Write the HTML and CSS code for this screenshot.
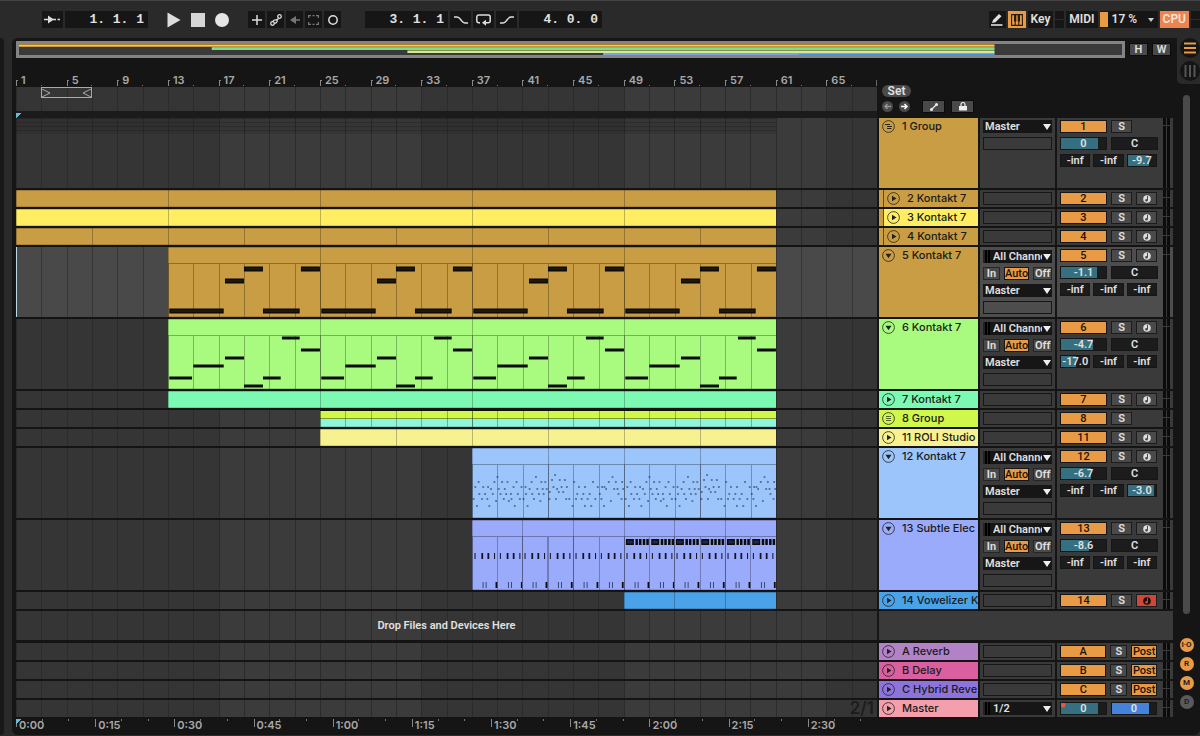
FILE: index.html
```html
<!DOCTYPE html>
<html lang="en">
<head>
    <meta charset="UTF-8">
    <meta name="viewport" content="width=device-width, initial-scale=1.0">
    <title>Arrangement</title>
    <link rel="stylesheet" href="styles.css">
</head>
<body>
    <header class="topbar">
        <div class="tools">
            <button class="cell wide" aria-label="Follow">
                <svg width="17" height="9" viewBox="0 0 17 9"><path d="M0 4.500h5" stroke="#ddd" stroke-width="1.500"/><path d="M4 0.500l6 4-6 4z" fill="#ddd"/><path d="M9 4.500h3M13.500 4.500h2.500" stroke="#ddd" stroke-width="1.500"/></svg>
            </button>
            <input class="position" type="text" aria-label="Song position" value="1. 1. 1">
        </div>
        <div class="tools transport">
            <button class="bare" aria-label="Play"><svg width="14" height="16" viewBox="0 0 14 16"><path d="M0.500 0.500v15L13.500 8z" fill="#ddd"/></svg></button>
            <button class="bare" aria-label="Stop"><svg width="14" height="14" viewBox="0 0 14 14"><path d="M0 0h14v14H0z" fill="#d6d6d6"/></svg></button>
            <button class="bare" aria-label="Record"><svg width="14" height="14" viewBox="0 0 14 14"><circle cx="7" cy="7" r="7" fill="#e6e6e6"/></svg></button>
        </div>
        <div class="tools">
            <button class="cell" aria-label="Overdub"><svg width="10" height="10" viewBox="0 0 10 10"><path d="M5 0v10M0 5h10" stroke="#ddd" stroke-width="1.500"/></svg></button>
            <button class="cell" aria-label="Automation arm"><svg width="12" height="12" viewBox="0 0 12 12" fill="none" stroke="#ddd" stroke-width="1.300"><circle cx="2.500" cy="9.500" r="1.800"/><circle cx="9.500" cy="2.500" r="1.800"/><path d="M3 7.800c0-2 1.500-2 3-2s2.300-.4 2.500-1.700M4.200 9.300c1.500 0 3-.5 3-3"/></svg></button>
            <button class="cell" aria-label="Re-enable automation"><svg width="10" height="8" viewBox="0 0 10 8"><path d="M0 4l6-4v8z" fill="#777"/><path d="M5 4h5" stroke="#777" stroke-width="1.500"/></svg></button>
            <button class="cell" aria-label="Capture"><svg width="11" height="10" viewBox="0 0 11 10"><path d="M0.600 3V0.600H3M8 0.600h2.400V3M10.400 7v2.400H8M3 9.400H0.600V7M4.500 0.600h2M4.500 9.400h2" fill="none" stroke="#777" stroke-width="1.200"/></svg></button>
            <button class="cell" aria-label="Session record"><svg width="10" height="10" viewBox="0 0 10 10"><circle cx="5" cy="5" r="4.200" fill="none" stroke="#ddd" stroke-width="1.500"/></svg></button>
        </div>
        <div class="tools loop">
            <input class="position" type="text" aria-label="Loop start" value="3. 1. 1">
            <button class="cell wide" aria-label="Punch in"><svg width="14" height="8" viewBox="0 0 14 8"><path d="M0 1h3c2 0 2.500 1 4 3s2 3 4 3h3" fill="none" stroke="#ddd" stroke-width="1.500"/></svg></button>
            <button class="cell wide" aria-label="Loop"><svg width="15" height="12" viewBox="0 0 15 12"><path d="M4 8.700H2.800a2 2 0 0 1-2-2V3a2 2 0 0 1 2-2h9.400a2 2 0 0 1 2 2v3.700a2 2 0 0 1-2 2H9" fill="none" stroke="#ddd" stroke-width="1.500"/><path d="M6 8.700L10 5.700v6z" fill="#ddd"/></svg></button>
            <button class="cell wide" aria-label="Punch out"><svg width="14" height="8" viewBox="0 0 14 8"><path d="M0 7h3c2 0 2.500-1 4-3s2-3 4-3h3" fill="none" stroke="#ddd" stroke-width="1.500"/></svg></button>
            <input class="position" type="text" aria-label="Loop length" value="4. 0. 0">
        </div>
        <div class="tools status">
            <button class="cell" aria-label="Draw mode"><svg width="12" height="12" viewBox="0 0 12 12"><path d="M1 9l1-3L8 0l2.500 2.300-6 6z" fill="#e0e0e0"/><path d="M0 11h11.500" stroke="#e0e0e0" stroke-width="1.600"/></svg></button>
            <button class="cell on" aria-label="Computer MIDI keyboard"><svg width="12" height="12" viewBox="0 0 12 12"><path d="M0.600 0.600h10.800v10.800H0.600zM4.200 6v5.500M7.800 6v5.500" fill="none" stroke="#2a1c0c" stroke-width="1.100"/><path d="M3 0.500h2.300v7H3zM6.700 0.500H9v7H6.700z" fill="#2a1c0c"/></svg></button>
            <button class="cell text">Key</button>
            <span class="leds"></span>
            <button class="cell text">MIDI</button>
            <span class="load">
                <span class="load-bar"></span>
                <span class="load-value">17 %</span>
                <svg width="6" height="4" viewBox="0 0 6 4"><path d="M0 0h6L3 4z" fill="#ccc"/></svg>
            </span>
            <button class="cell text cpu">CPU</button>
            <span class="leds"></span>
        </div>
    </header>

    <main class="workspace">
        <div class="browser-edge"></div>
        <div class="panel">
            <div class="arrangement">
                <div class="overview-row">
                    <div class="overview">
                        <svg viewBox="0 0 68 11" preserveAspectRatio="none">
                            <path d="M0 0h60v1H0z" fill="#ab7d2c"/>
                            <path d="M0 1h60v1H0z" fill="#f0cf55"/>
                            <path d="M0 2h60v1H0z" fill="#c8973a"/>
                            <path d="M12 3h48v1H12z" fill="#c99d43"/>
                            <path d="M12 4h48v2H12z" fill="#77e08a"/>
                            <path d="M24 6h36v1H24z" fill="#8b8f45"/>
                            <path d="M24 7h36v2H24z" fill="#cfe9a0"/>
                            <path d="M36 9h24v2H36z" fill="#7d9fe4"/>
                            <path d="M48 10h12v1H48z" fill="#4a8fe0"/>
                        </svg>
                    </div>
                    <button class="gray">H</button>
                    <button class="gray">W</button>
                </div>
                <div class="ruler-row">
                    <div class="ruler">
                        <div class="bars" id="bars"></div>
                        <div class="loop-lane grid-lines"><span class="loop-brace"><svg width="9" height="8" viewBox="0 0 9 8"><path d="M0 0l8 4-8 4" fill="none" stroke="#aaa"/></svg><svg width="9" height="8" viewBox="0 0 9 8"><path d="M9 0L1 4l8 4" fill="none" stroke="#aaa"/></svg></span></div>
                        <div class="scrub"><i class="marker"></i></div>
                    </div>
                    <div class="locators">
                        <button class="set">Set</button>
                        <div class="locator-buttons">
                            <button class="round" aria-label="Previous locator"><svg width="7" height="7" viewBox="0 0 7 7"><path d="M7 3.500H1M3.500 1L1 3.500 3.500 6" fill="none" stroke="#999" stroke-width="1.300"/></svg></button>
                            <button class="round" aria-label="Next locator"><svg width="7" height="7" viewBox="0 0 7 7"><path d="M0 3.500h6M3.500 1L6 3.500 3.500 6" fill="none" stroke="#fff" stroke-width="1.500"/></svg></button>
                            <button class="gray tool" aria-label="Automation mode"><svg width="8" height="8" viewBox="0 0 8 8"><path d="M1.500 6.500l5-5" stroke="#eee" stroke-width="1.200"/><circle cx="1.500" cy="6.500" r="1.500" fill="#eee"/><circle cx="6.500" cy="1.500" r="1.500" fill="#eee"/></svg></button>
                            <button class="gray tool" aria-label="Lock envelopes"><svg width="8" height="9" viewBox="0 0 8 9"><path d="M0 4h8v4.500H0z" fill="#eee"/><path d="M2 4V2.500a2 2 0 0 1 4 0V4" fill="none" stroke="#eee" stroke-width="1.200"/></svg></button>
                        </div>
                    </div>
                </div>
                <div id="tracks"></div>
                <div class="time-row">
                    <div class="times" id="times"><i class="marker"></i></div>
                </div>
            </div>
            <aside class="rail">
                <div class="views">
                    <button aria-label="Arrangement view"><svg width="20" height="20" viewBox="0 0 20 20"><circle cx="10" cy="10" r="10" fill="#151515"/><path d="M4 5.500h12M4 10h12M4 14.500h12" stroke="#e89b44" stroke-width="2"/></svg></button>
                    <button aria-label="Session view"><svg width="20" height="20" viewBox="0 0 20 20"><circle cx="10" cy="10" r="10" fill="#151515"/><path d="M5.500 4v12M10 4v12M14.500 4v12" stroke="#555" stroke-width="2"/></svg></button>
                </div>
                <div class="scrollbar"></div>
                <div class="sections">
                    <button class="on" aria-label="Input output section">I·O</button>
                    <button class="on" aria-label="Returns section">R</button>
                    <button class="on" aria-label="Mixer section">M</button>
                    <button aria-label="Track delay section">D</button>
                </div>
            </aside>
        </div>
    </main>
    <script src="script.js"></script>
</body>
</html>
```

FILE: styles.css
```css
* {
    box-sizing: border-box;
}
body {
    margin: 0;
    min-height: 100vh;
    background-color: #2a2a2a;
    border-top: 1px solid #444;
    color: #e0e0e0;
    font-family: Roboto, "Liberation Sans", sans-serif;
    font-size: 11px;
    font-weight: 600;
    line-height: 13px;
    overflow-x: hidden;
}
button, input, select {
    font: inherit;
    color: inherit;
    margin: 0;
    padding: 0;
    border: none;
    border-radius: 0;
    background: none;
}
button {
    display: flex;
    align-items: center;
    justify-content: center;
    cursor: pointer;
}
svg {
    display: block;
}

/* Top bar */
.topbar {
    display: flex;
    align-items: center;
    height: 37px;
    padding-left: 42px;
}
.tools {
    display: flex;
    align-items: center;
    gap: 2px;
}
.cell, .position {
    width: 17px;
    height: 17px;
    background-color: #161616;
}
.cell.wide {
    width: 21px;
}
.cell.on {
    background-color: #e89b44;
    width: 18px;
}
.cell.text {
    width: auto;
    padding: 0 3px;
    font-size: 12px;
}
.position {
    width: 83px;
    padding-right: 4px;
    text-align: right;
    font-family: "Liberation Mono", monospace;
    font-size: 13px;
    font-weight: bold;
}
.transport {
    gap: 10px;
    margin: 0 19px;
}
.loop {
    margin-left: 24px;
}
.status {
    margin-left: auto;
}
.leds {
    width: 9px;
    height: 17px;
    background: linear-gradient(#161616 8px, #2a2a2a 8px 9px, #161616 9px);
}
.load {
    display: flex;
    align-items: center;
    width: 58px;
    height: 17px;
    padding-right: 4px;
    background-color: #161616;
    font-size: 12px;
}
.load-bar {
    width: 8px;
    height: 15px;
    background-color: #e89b44;
}
.load-value {
    flex: 1;
    padding-left: 4px;
}
.cell.cpu {
    background-color: #ef8350;
    color: #f3e6d8;
}

/* Workspace */
.workspace {
    display: flex;
    gap: 8px;
}
.browser-edge {
    width: 4px;
    background-color: #181818;
    border-radius: 0 5px 5px 0;
}
.panel {
    flex: 1;
    display: flex;
    min-width: 0;
    background-color: #151515;
    border-radius: 6px;
    padding-left: 4px;
}
.arrangement {
    flex: 1;
    min-width: 0;
    padding-top: 3px;
}
.overview-row {
    display: flex;
    align-items: center;
    gap: 4px;
    padding-right: 2px;
}
.overview {
    flex: 1;
    height: 17px;
    border: 3px solid #848484;
    background-color: #3a3a3a;
    overflow: hidden;
}
.overview svg {
    width: calc(100% + 6px);
    height: 11px;
    margin: 0 -3px;
}
.gray {
    width: 19px;
    height: 13px;
    background-color: #4a4a4a;
    border: 1px solid #0c0c0c;
}

/* Ruler */
.ruler-row {
    display: flex;
}
.ruler {
    flex: 1;
    padding-top: 16px;
}
.bars {
    display: grid;
    grid-template-columns: repeat(17, 1fr);
    background: linear-gradient(#666, #666) 100% 6px / 1px 6px no-repeat;
}
.bars, .times {
    color: #a8a8a8;
    font-family: Inter, "Liberation Sans", sans-serif;
}
.bars span {
    padding-left: 5px;
    background:
        linear-gradient(#888, #888) 0 6px / 1px 6px no-repeat,
        linear-gradient(#888, #888) 0 6px / 2px 1px no-repeat,
        linear-gradient(#777, #777) 50% 11px / 1px 1px no-repeat;
}
.grid-lines {
    background:
        repeating-linear-gradient(to right, #2b2b2b 0 1px, transparent 1px calc(100% / 34)),
        repeating-linear-gradient(to right, #353535 0 calc(100% / 4.25), #3b3b3b calc(100% / 4.25) calc(100% / 2.125));
}
.loop-lane {
    height: 24px;
}
.loop-brace {
    display: flex;
    justify-content: space-between;
    align-items: center;
    width: calc(100% / 17);
    height: 11px;
    margin-left: calc(100% / 34);
    border: 1px solid #aaa;
}
.scrub {
    display: flex;
    align-items: flex-end;
    height: 7px;
    background-color: #1b1b1b;
}
.marker {
    width: 5px;
    height: 5px;
    background: linear-gradient(135deg, #5bc0de 50%, transparent 50%);
}
.locators {
    width: 296px;
    padding: 27px 0 0 5px;
}
.set {
    width: 29px;
    height: 12px;
    border-radius: 6px;
    background-color: #4a4a4a;
    font-size: 12px;
}
.locator-buttons {
    display: flex;
    align-items: center;
    gap: 6px;
    padding-top: 3px;
}
.round {
    width: 11px;
    height: 11px;
    border-radius: 50%;
    background-color: #4a4a4a;
}
.gray.tool {
    width: 23px;
}
.round + .tool {
    margin-left: 6px;
}

/* Tracks */
.track {
    display: flex;
    gap: 2px;
    height: 19px;
    border-bottom: 2px solid #141414;
}
.track.tall {
    height: 72px;
}
.track.drop {
    height: 32px;
    border-bottom-width: 3px;
}
.lane {
    flex: 1;
    min-width: 0;
    display: grid;
    grid-template-columns: repeat(68, minmax(0, 1fr));
    grid-template-rows: 100%;
}
.lane-text {
    grid-column: 1 / -1;
    align-self: center;
    text-align: center;
}
.lane-grid {
    grid-column: 1 / -1;
    text-align: right;
    padding-right: 3px;
    color: #1c1c1c;
    font-family: Inter, "Liberation Sans", sans-serif;
    font-size: 17px;
    line-height: 17px;
}
.selected .lane {
    background:
        repeating-linear-gradient(to right, #363636 0 1px, transparent 1px calc(100% / 34)),
        #494949;
    box-shadow: inset 1px 0 #b8dce6;
}
.clip {
    display: flex;
    flex-direction: column;
    overflow: hidden;
    background-color: var(--color);
    box-shadow: inset 1px 0 rgba(0, 0, 0, 0.25), inset 0 1px rgba(0, 0, 0, 0.2), inset 0 -1px rgba(0, 0, 0, 0.15);
}
.clip-title {
    flex: none;
    height: 17px;
    border-bottom: 1px solid rgba(0, 0, 0, 0.3);
}
.clip-body {
    flex: 1;
    min-height: 0;
    width: 100%;
}
.clip-lines {
    background-image: repeating-linear-gradient(to right, rgba(0, 0, 0, 0.28) 0 1px, transparent 1px calc(100% / var(--cells)));
}
.clip-split {
    background: linear-gradient(#141414 1px, #cff84a 1px 8px, #7d9a25 8px 9px, #8ff5dc 9px);
}
.clip-stripes {
    height: 16px;
    background: repeating-linear-gradient(rgba(0, 0, 0, 0.25) 0 1px, rgba(0, 0, 0, 0.1) 1px 4px);
}
.track-head {
    display: flex;
    align-items: flex-start;
    gap: 7px;
    width: 99px;
    padding: 2px 3px;
    background-color: var(--color);
    color: #1a1a1a;
    font-family: Inter, "Liberation Sans", sans-serif;
    font-weight: 500;
    white-space: nowrap;
    overflow: hidden;
}
.nested .track-head {
    border-left: 4px solid #c99d43;
    box-shadow: inset 1px 0 #5c4a20;
    padding-left: 4px;
}
.fold {
    flex: none;
}
.io, .mixer, .drop-fill {
    background-color: #3a3a3a;
}
.selected .io, .selected .mixer {
    background-color: #4d4d4d;
}
.drop-fill {
    width: 294px;
}
.io {
    display: flex;
    flex-direction: column;
    gap: 4px;
    width: 75px;
    padding: 2px 3px;
}
.midi .io {
    padding-top: 3px;
}
.slot {
    height: 13px;
    border: 1px solid #161616;
}
.choice {
    position: relative;
    display: flex;
    height: 13px;
    background-color: #161616;
}
.choice select {
    appearance: none;
    width: 100%;
    height: 13px;
    padding: 0 9px 0 2px;
    text-overflow: clip;
}
.choice.metered select {
    padding-left: 10px;
}
.choice.metered {
    background: linear-gradient(to right, #222 2px, #000 2px 4px, #222 4px 5px, #000 5px 7px, #161616 7px);
}
.choice svg {
    position: absolute;
    right: 0;
    top: 0;
    background-color: #161616;
    pointer-events: none;
}
.monitor {
    display: flex;
    gap: 4px;
}
.monitor button {
    flex: 0 0 17px;
    height: 13px;
    background-color: #4a4a4a;
    border: 1px solid #262626;
}
.monitor .on {
    flex: 1;
}
.monitor button:last-child {
    flex-basis: 19px;
}
.monitor button.on, .post, .activator {
    background-color: #e89b44;
    color: #1c1208;
    font-weight: 500;
    border: 1px solid #161616;
}
.mixer {
    display: flex;
    justify-content: space-between;
    width: 116px;
    padding: 0 3px;
}
.strip {
    display: flex;
    flex-direction: column;
    gap: 4px;
    width: 97px;
    padding-top: 2px;
}
.strip-row {
    display: flex;
    gap: 4px;
}
.strip-row.sends {
    gap: 3px;
}
.activator {
    width: 47px;
    height: 13px;
}
.small {
    width: 21px;
    height: 13px;
    background-color: #4a4a4a;
    border: 1px solid #1c1c1c;
}
.return .small {
    width: 17px;
}
.small.armed {
    background-color: #cf463b;
}
.post {
    width: 26px;
    height: 13px;
}
.value {
    width: 47px;
    height: 13px;
    text-align: center;
    border: 1px solid #161616;
    background: linear-gradient(to right, #34707f var(--fill), #1c1c1c var(--fill));
}
.sends .value {
    width: 31px;
    min-width: 0;
}
.value.cue {
    width: 46px;
    background: linear-gradient(to right, #4583da var(--fill), #1c1c1c var(--fill));
}
.value.dotted {
    background:
        radial-gradient(circle at 2px 2px, #e05a48 2px, transparent 3px),
        linear-gradient(to right, #34707f var(--fill), #1c1c1c var(--fill));
}
.meter {
    width: 7px;
    background:
        linear-gradient(#3a3a3a, #3a3a3a) 0 7px / 7px 1px no-repeat,
        linear-gradient(to right, #0b0b0b 3px, #3a3a3a 3px 4px, #0b0b0b 4px);
}

/* Time ruler */
.time-row {
    padding-right: 296px;
}
.times {
    position: relative;
    display: flex;
    height: 16px;
    overflow: hidden;
}
.times .marker {
    position: absolute;
    left: 0;
    top: 0;
}
.times span {
    flex: none;
    width: calc(100% / 10.875);
    padding-left: 3px;
    background:
        linear-gradient(#888, #888) 0 0 / 1px 8px no-repeat,
        linear-gradient(#777, #777) 33% 0 / 1px 2px no-repeat,
        linear-gradient(#777, #777) 67% 0 / 1px 2px no-repeat;
}

/* Right rail */
.rail {
    display: flex;
    flex-direction: column;
    align-items: center;
    width: 27px;
    padding-bottom: 26px;
}
.views {
    align-self: flex-end;
    display: flex;
    flex-direction: column;
    align-items: flex-end;
    gap: 3px;
    width: 23px;
    height: 46px;
    background-color: #2a2a2a;
    border-bottom-left-radius: 5px;
}
.scrollbar {
    flex: 1;
    width: 7px;
    margin: 11px 0 24px;
    border-radius: 4px;
    background-color: #4a4a4a;
}
.sections {
    display: flex;
    flex-direction: column;
    gap: 5px;
}
.sections button {
    width: 14px;
    height: 14px;
    border-radius: 50%;
    background-color: #5a5a5a;
    color: #1a1a1a;
    font-size: 8px;
    line-height: 14px;
}
.sections .on {
    background-color: #e89b44;
}
```

FILE: script.js
```js
const ORANGE = '#c99d43';

// bar: length of one clip, in bars
const tracks = [
    { name: '1 Group', num: '1', color: ORANGE, type: 'group', tall: true, vol: '0', volFill: 83, sends: [['-inf', 0], ['-inf', 0], ['-9.7', 76]] },
    { name: '2 Kontakt 7', num: '2', color: ORANGE, nested: true, start: 1, bar: 12 },
    { name: '3 Kontakt 7', num: '3', color: '#ffee62', nested: true, start: 1, bar: 12 },
    { name: '4 Kontakt 7', num: '4', color: ORANGE, nested: true, start: 1, bar: 6 },
    { name: '5 Kontakt 7', num: '5', color: ORANGE, type: 'midi', tall: true, selected: true, start: 13, bar: 12, notes: 'bass', vol: '-1.1', volFill: 81, sends: [['-inf', 0], ['-inf', 0], ['-inf', 0]] },
    { name: '6 Kontakt 7', num: '6', color: '#a9fb80', type: 'midi', tall: true, start: 13, bar: 12, notes: 'melody', vol: '-4.7', volFill: 71, sends: [['-17.0', 55], ['-inf', 0], ['-inf', 0]] },
    { name: '7 Kontakt 7', num: '7', color: '#7cfab4', start: 13, bar: 12 },
    { name: '8 Group', num: '8', color: '#cff84a', type: 'group', start: 25, bar: 12 },
    { name: '11 ROLI Studio', num: '11', color: '#f7f18f', start: 25, bar: 6 },
    { name: '12 Kontakt 7', num: '12', color: '#9bc5fb', type: 'midi', tall: true, start: 37, bar: 6, notes: 'arp', vol: '-6.7', volFill: 67, sends: [['-inf', 0], ['-inf', 0], ['-3.0', 92]] },
    { name: '13 Subtle Elec', num: '13', color: '#9babfb', type: 'midi', tall: true, start: 37, bar: 4, notes: 'drums', vol: '-8.6', volFill: 63, sends: [['-inf', 0], ['-inf', 0], ['-inf', 0]] },
    { name: '14 Vowelizer K', num: '14', color: '#4aa3e8', start: 49, bar: 4, armed: true },
    { type: 'drop' },
    { name: 'A Reverb', num: 'A', color: '#b183c6', type: 'return' },
    { name: 'B Delay', num: 'B', color: '#d95fa0', type: 'return' },
    { name: 'C Hybrid Reve', num: 'C', color: '#8c74dc', type: 'return' },
    { name: 'Master', color: '#f49fab', type: 'master' }
];
const END = 61;

// [start, end, y], x in bars from the clip start
const bass = [[0.1, 4.4, 47], [4.5, 6, 17], [6, 7.5, 5], [7.5, 10.4, 47], [10.5, 12, 5]];
const melody = [[0.1, 1.9, 42], [2, 4.4, 30], [4.5, 6, 22], [6, 7.5, 50], [7.5, 8.9, 42], [9, 10.4, 2], [10.5, 12, 14]];

// arpeggio steps, one line for each pair of bars: tick (38 to the bar) and row
const arpRows = [10, 12, 15, 17, 22, 24, 27, 29, 34, 36, 41];
const arp = [
    '4:8 9:4 14:10 19:3 21:7 29:8 33:4 38:7 47:4 45:8 51:10 56:5 61:7 66:3 71:9',
    '75:1 79:5 84:7 89:3 97:5 94:8 101:7 105:3 109:9 115:7 117:8 123:4 127:10 132:3 136:7 142:8 147:4',
    '153:8 159:4 160:7 165:10 171:5 177:3 179:7 184:8 190:1 194:5 199:7 203:9 206:3 210:5 213:7 218:3 222:5',
    '230:8 231:6 238:2 242:4 247:0 249:8 253:5 258:6 261:2 266:4 271:6 276:2 280:8 282:4 289:8 299:10',
    '304:3 309:8 313:7 318:4 326:8 331:7 336:4 336:10 344:8 350:7 355:10 360:3 367:8 374:4',
    '380:7 385:8 387:4 393:10 394:4 399:5 407:3 413:9 418:1 423:5 428:3 433:5 436:7 447:3 445:8 450:5'
].join(' ').split(' ').map(s => s.split(':').map(Number));

function rect(x1, x2, y, h, fill) {
    return `<rect x="${x1.toFixed(2)}" y="${y - h / 2}" width="${(x2 - x1).toFixed(2)}" height="${h}" fill="${fill || '#0b0b0b'}"/>`;
}

function noteShapes(kind) {
    let out = '';
    if (kind === 'bass' || kind === 'melody') {
        for (let rep = 0; rep < 48; rep += 12) {
            (kind === 'bass' ? bass : melody).forEach(([a, b, y]) => {
                out += rect(rep + a, rep + b, y, kind === 'bass' ? 5 : 3);
                if (kind === 'bass') out += rect(rep + a + 0.1, rep + b - 0.1, y, 2, '#1f1808');
            });
        }
    }
    if (kind === 'arp') {
        for (let rep = 0; rep < 24; rep += 12) {
            arp.forEach(([t, row]) => {
                const x = rep + t / 37.75;
                out += rect(x - 0.05, x + 0.09, arpRows[row], 1, '#14243a');
            });
        }
    }
    if (kind === 'drums') {
        for (let cell = 0; cell < 24; cell += 2) {
            [0.2, 0.74, 1.22, 1.74].forEach((x, i) => out += rect(cell + x, cell + x + (i % 3 ? 0.14 : 0.08), 19, 6, '#10132a'));
            [0.84, 1.08].forEach(x => out += rect(cell + x, cell + x + 0.07, 48, 6, '#333a66'));
            out += rect(cell + 1.86, cell + 2, 48, 6);
            if (cell >= 12) {
                out += rect(cell + 0.15, cell + 0.78, 5, 6);
                out += rect(cell + 0.25, cell + 0.68, 5, 3, '#22284a');
                [0.9, 1.18, 1.48, 1.76].forEach(x => out += rect(cell + x, cell + x + 0.2, 5, 6));
            }
        }
    }
    return out;
}

// the part of the note drawing that lies under one clip
function clipHtml(t, from) {
    const to = Math.min(from + t.bar, END);
    const place = `grid-column: ${from} / ${to}; --color: ${t.color}; --cells: ${(to - from) / 2}`;
    if (t.type === 'group') {
        return `<div class="clip clip-split" style="${place}"><div class="clip-body clip-lines"></div></div>`;
    }
    if (!t.notes) {
        return `<div class="clip" style="${place}"></div>`;
    }
    return `
        <div class="clip" style="${place}">
            <div class="clip-title"></div>
            <svg class="clip-body clip-lines" viewBox="${from - t.start} 0 ${to - from} 53" preserveAspectRatio="none">${noteShapes(t.notes)}</svg>
        </div>`;
}

function lane(t) {
    let out = '';
    if (t.start) {
        for (let bar = t.start; bar < END; bar += t.bar) out += clipHtml(t, bar);
    } else if (t.type === 'group') {
        out = `<div class="clip-stripes" style="grid-column: 1 / ${END}"></div>`;
    } else if (t.type === 'drop') {
        out = '<span class="lane-text">Drop Files and Devices Here</span>';
    } else if (t.type === 'master') {
        out = '<span class="lane-grid">2/1</span>';
    }
    return `<div class="lane grid-lines">${out}</div>`;
}

function foldIcon(t) {
    let shape = '<path d="M5 3.800v5.400L9.500 6.500z" fill="#222"/>';
    if (t.type === 'midi') shape = '<path d="M3.500 4.800h6L6.500 9.300z" fill="#222"/>';
    if (t.type === 'group') {
        shape = t.tall
            ? '<path d="M3 4.500h5M5 6.500h5M5 8.500h4.500" stroke="#222"/>'
            : '<path d="M4 4.500h5M4 6.500h5M4 8.500h5" stroke="#222" stroke-opacity=".7"/>';
    }
    return `<svg width="13" height="13" viewBox="0 0 13 13"><circle cx="6.500" cy="6.500" r="5.900" fill="none" stroke="#222" stroke-opacity=".8"/>${shape}</svg>`;
}

function choice(label, text, metered) {
    return `
        <div class="choice ${metered ? 'metered' : ''}">
            <select aria-label="${label}"><option>${text}</option></select>
            <svg width="10" height="13" viewBox="0 0 10 13"><path d="M1 4h8L5 10z" fill="#eee"/></svg>
        </div>`;
}

function ioSection(t) {
    const slot = '<div class="slot"></div>';
    if (t.type === 'midi') {
        return choice('Input channel', 'All Channels', true) +
            '<div class="monitor"><button>In</button><button class="on">Auto</button><button>Off</button></div>' +
            choice('Output', 'Master') + slot;
    }
    if (t.type === 'master') return choice('Master out', '1/2', true);
    if (t.tall) return choice('Output', 'Master') + slot;
    return slot;
}

function value(label, text, fill, cls) {
    return `<input class="value ${cls || ''}" type="text" aria-label="${label}" value="${text}" style="--fill: ${fill}%">`;
}

function mixerSection(t) {
    if (t.type === 'master') {
        return `<div class="strip-row">${value('Master volume', '0', 83, 'dotted')}${value('Cue volume', '0', 84, 'cue')}</div>`;
    }
    let out = `<div class="strip-row"><button class="activator">${t.num}</button><button class="small">S</button>`;
    if (t.type === 'return') {
        out += '<button class="post">Post</button>';
    } else if (t.type !== 'group') {
        const [disc, hole] = t.armed ? ['#1c0c0a', '#cf463b'] : ['#ddd', '#4a4a4a'];
        out += `<button class="small ${t.armed ? 'armed' : ''}" aria-label="Arm ${t.num}"><svg width="8" height="8" viewBox="0 0 8 8"><circle cx="4" cy="4" r="3.800" fill="${disc}"/><path d="M4.500 1v4" stroke="${hole}"/><circle cx="3.500" cy="5.200" r="1.300" fill="${hole}"/></svg></button>`;
    }
    out += '</div>';
    if (t.tall) {
        out += `<div class="strip-row">${value('Volume ' + t.num, t.vol, t.volFill)}${value('Pan ' + t.num, 'C', 0)}</div>`;
        out += `<div class="strip-row sends">${t.sends.map(([s, fill], i) => value('Send ' + 'ABC'[i], s, fill)).join('')}</div>`;
    }
    return out;
}

function trackRow(t) {
    const cls = ['track', t.type || '', t.tall ? 'tall' : '', t.nested ? 'nested' : '', t.selected ? 'selected' : ''].join(' ');
    if (t.type === 'drop') {
        return `<div class="${cls}">${lane(t)}<div class="drop-fill"></div></div>`;
    }
    return `
        <div class="${cls}">
            ${lane(t)}
            <div class="track-head" style="--color: ${t.color}">
                <button class="fold" aria-label="Unfold ${t.name}">${foldIcon(t)}</button>
                <span>${t.name}</span>
            </div>
            <div class="io">${ioSection(t)}</div>
            <div class="mixer">
                <div class="strip">${mixerSection(t)}</div>
                <div class="meter"></div>
            </div>
        </div>`;
}

document.getElementById('tracks').innerHTML = tracks.map(trackRow).join('');

for (let bar = 1; bar <= 65; bar += 4) {
    document.getElementById('bars').insertAdjacentHTML('beforeend', `<span>${bar}</span>`);
}
for (let sec = 0; sec <= 150; sec += 15) {
    const label = Math.floor(sec / 60) + ':' + String(sec % 60).padStart(2, '0');
    document.getElementById('times').insertAdjacentHTML('beforeend', `<span>${label}</span>`);
}
```
